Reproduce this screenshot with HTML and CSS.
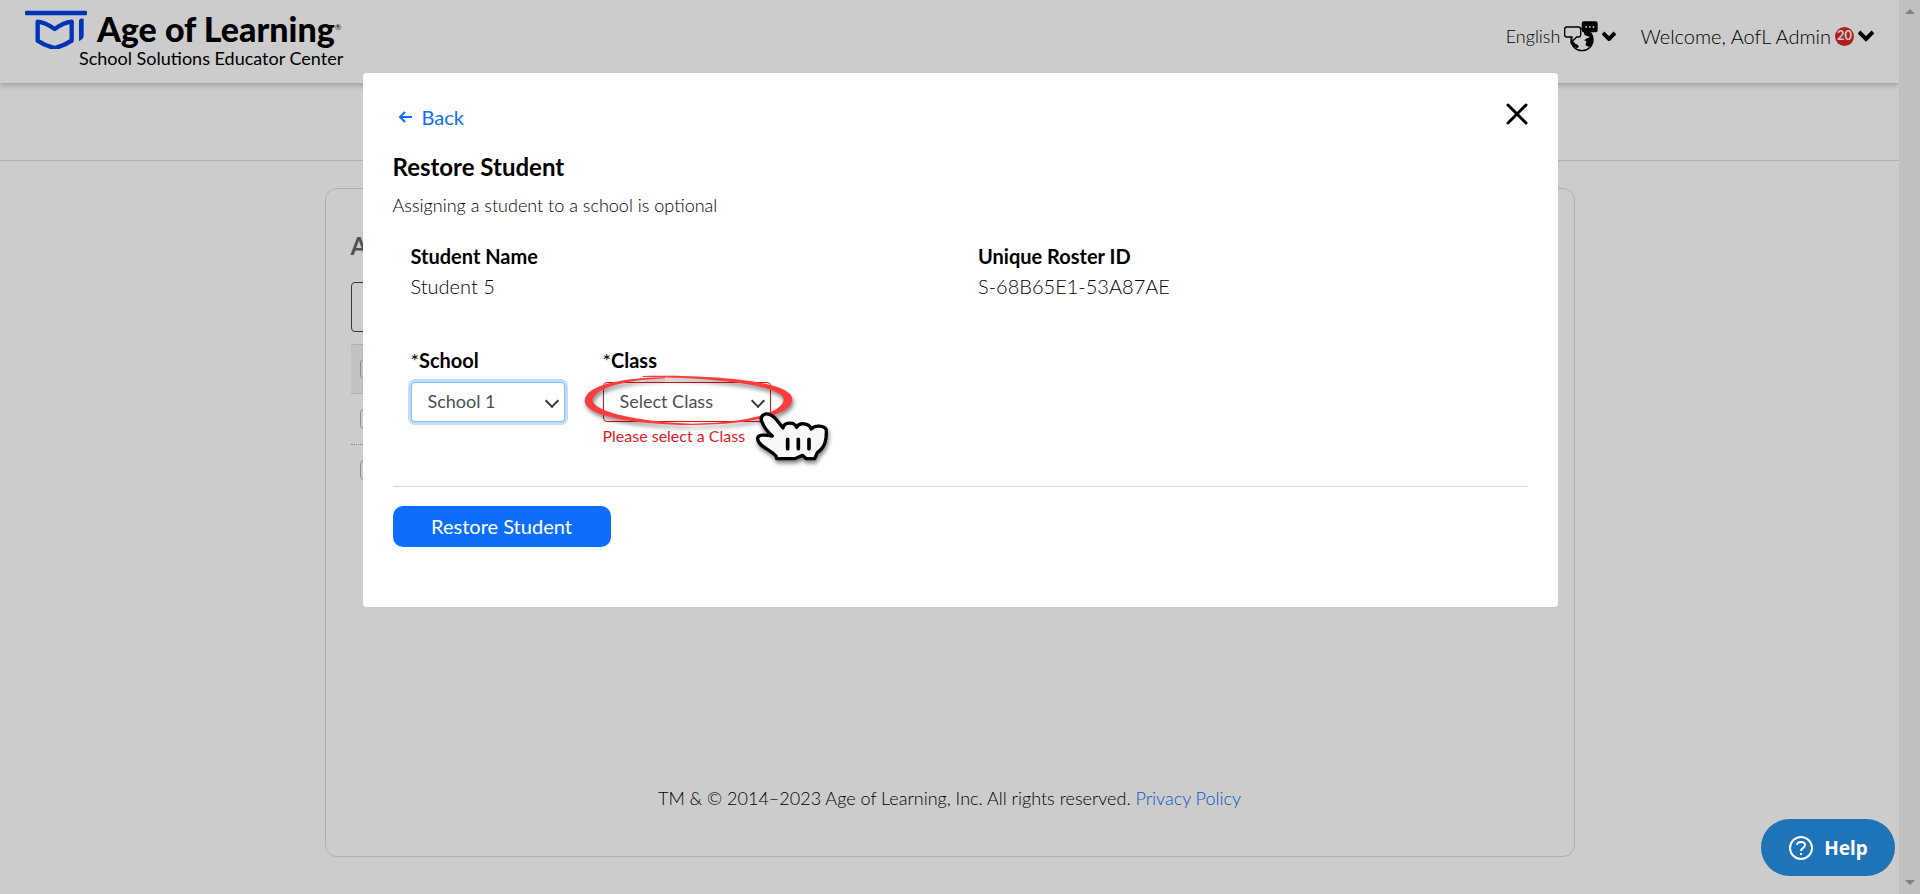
FILE: index.html
```html
<!DOCTYPE html>
<html lang="en">

<head>
    <meta charset="UTF-8">
    <meta name="viewport" content="width=device-width, initial-scale=1.0">
    <title>School Solutions Educator Center</title>
    <link rel="stylesheet" href="styles.css">
</head>

<body>
    <div class="page">
        <header class="header">
            <a class="brand" href="#" aria-label="Age of Learning">
                <svg class="brand-mark" width="62" height="40" viewBox="0 0 186 120" fill="none">
                    <rect x="0" y="5" width="186" height="14" rx="3" fill="#0040ea" />
                    <path d="M38 38 Q60 40 89 60 Q117 40 140 38 V95 Q116 111 89 117 Q60 110 38 95 Z" stroke="#0040ea" stroke-width="13" stroke-linejoin="round" />
                    <path d="M162 34 Q164 26 176 29 V83 Q173 92 162 97 Z" fill="#0040ea" />
                </svg>
                <span class="brand-text">
                    <span class="brand-name">Age of Learning<sup>®</sup></span>
                    <span class="brand-sub">School Solutions Educator Center</span>
                </span>
            </a>
            <nav class="tools">
                <button class="tool tool-lang" type="button">
                    English
                    <svg width="34" height="31" viewBox="0 0 102 93">
                        <circle cx="54" cy="56" r="33" fill="#fff" stroke="#000" stroke-width="4" />
                        <path d="M56 24 Q84 28 87 54 Q86 66 80 74 Q70 82 64 70 Q72 60 60 58 Q70 50 78 48 L62 42 Z M22 62 Q30 60 34 68 Q46 72 44 78 Q40 82 36 80 Q24 76 22 62 Z" fill="#000" />
                        <path d="M8 18 H43 Q50 18 50 25 V41 Q50 48 43 48 H38 L22 64 L24 48 H8 Q2 48 2 41 V25 Q2 18 8 18 Z" fill="#fff" stroke="#000" stroke-width="4" />
                        <path d="M59 1 H95 Q101 1 101 8 V28 Q101 34 95 34 H80 L66 46 L68 34 H60 Q53 34 53 28 V8 Q53 1 59 1 Z" fill="#000" />
                        <path d="M64 18 h5 M75 18 h5 M86 18 h5" stroke="#fff" stroke-width="5" />
                    </svg>
                    <svg width="14" height="10" viewBox="0 0 14 10" fill="none" stroke="#000" stroke-width="4">
                        <path d="M1 2 L7 8 L13 2" />
                    </svg>
                </button>
                <button class="tool" type="button">
                    Welcome, AofL Admin
                    <span class="count">20</span>
                    <svg width="16" height="12" viewBox="0 0 16 12" fill="none" stroke="#000" stroke-width="4">
                        <path d="M1 2 L8 9 L15 2" />
                    </svg>
                </button>
            </nav>
        </header>
        <div class="subnav"></div>
        <main class="card">
            <h1 class="card-title">A</h1>
            <div class="filter"></div>
            <ul class="rows">
                <li class="row row-head"><input type="checkbox" aria-label="Select all"></li>
                <li class="row"><input type="checkbox" aria-label="Select student"></li>
                <li class="row"><input type="checkbox" aria-label="Select student"></li>
            </ul>
            <footer class="footer">
                TM &amp; © 2014–2023 Age of Learning, Inc. All rights reserved. <a href="#">Privacy Policy</a>
            </footer>
        </main>
    </div>
    <div class="scrollbar">
        <span class="arrow arrow-up"></span>
        <span class="arrow arrow-down"></span>
    </div>

    <div class="overlay">
        <section class="modal" role="dialog" aria-labelledby="modal-title">
            <div class="modal-top">
                <a class="back" href="#">
                    <svg width="14" height="12" viewBox="0 0 14 12" fill="none" stroke="#0d6efd" stroke-width="2">
                        <path d="M14 6 H2 M7 1 L2 6 L7 11" />
                    </svg>
                    Back
                </a>
                <button class="close" type="button" aria-label="Close">
                    <svg width="22" height="22" viewBox="0 0 22 22" fill="none" stroke="#000" stroke-width="3" stroke-linecap="round">
                        <path d="M2 2 L20 20 M20 2 L2 20" />
                    </svg>
                </button>
            </div>
            <h2 class="modal-title" id="modal-title">Restore Student</h2>
            <p class="note">Assigning a student to a school is optional</p>
            <dl class="info">
                <div>
                    <dt>Student Name</dt>
                    <dd>Student 5</dd>
                </div>
                <div>
                    <dt>Unique Roster ID</dt>
                    <dd>S-68B65E1-53A87AE</dd>
                </div>
            </dl>
            <form class="fields">
                <div class="field">
                    <label for="school"><span>*</span>School</label>
                    <div class="select-wrap">
                        <select class="select select-focus" id="school">
                            <option>School 1</option>
                        </select>
                    </div>
                </div>
                <div class="field">
                    <label for="class"><span>*</span>Class</label>
                    <div class="select-wrap">
                        <select class="select select-error" id="class">
                            <option>Select Class</option>
                        </select>
                        <svg class="pointer" width="255" height="100" viewBox="600 120 765 300">
                            <path class="ring" d="M788 138 C960 134 1237 148 1237 208 C1235 262 1080 286 930 285 C780 283 617 262 614 212 C616 168 720 143 855 142 L855 145 C740 150 646 172 637 210 C642 250 800 277 935 281 C1080 278 1208 255 1211 208 C1205 165 1000 143 788 141 Z" />
                            <path class="hand" d="M1146 276 C1138 260 1152 248 1168 253 C1186 258 1197 280 1209 294 C1212 276 1242 274 1250 292 C1257 276 1286 278 1294 297 C1304 284 1334 286 1339 300 C1340 330 1336 350 1312 368 L1304 386 L1278 386 L1268 376 L1244 386 L1190 386 L1188 378 C1170 358 1137 350 1133 328 C1130 312 1158 314 1177 318 C1162 305 1152 292 1146 276 Z" />
                            <path d="M1223 328 V356 M1255 328 V356 M1287 328 V356" fill="none" stroke="#000" stroke-width="11" stroke-linecap="round" />
                        </svg>
                    </div>
                    <p class="error">Please select a Class</p>
                </div>
            </form>
            <div class="actions">
                <button class="submit" type="button">Restore Student</button>
            </div>
        </section>
    </div>

    <button class="help" type="button">
        <svg width="26" height="26" viewBox="0 0 26 26" fill="none" stroke="#fff" stroke-width="2">
            <circle cx="13" cy="13" r="11" />
            <path d="M9 10 C9 6 17 6 17 10 C17 13 13 13 13 16" />
            <path d="M13 18 V20" />
        </svg>
        Help
    </button>
</body>

</html>
```
FILE: styles.css
```css
* {
    padding: 0;
    margin: 0;
    box-sizing: border-box;
}

body {
    display: grid;
    grid-template-columns: 1fr 21px;
    min-height: 100vh;
    font-family: Lato, "Open Sans", sans-serif;
    font-size: 20px;
    font-weight: 300;
    color: #000;
    background-color: #fff;
}

a {
    color: #0d6efd;
    text-decoration: none;
}

button {
    font-family: inherit;
    font-weight: inherit;
    border: none;
    cursor: pointer;
}

.page {
    display: flex;
    flex-direction: column;
}

.header {
    display: flex;
    justify-content: space-between;
    height: 83px;
    padding: 8px 25px 0;
    box-shadow: 0 2px 6px rgba(0, 0, 0, .25);
}

.brand {
    display: flex;
    color: #000;
}

.brand-mark {
    margin-top: 1px;
}

.brand-text {
    display: flex;
    flex-direction: column;
    margin-left: -8px;
}

.brand-name {
    padding-left: 18px;
    font-size: 34px;
    font-weight: 900;
    line-height: 41px;
}

.brand-name sup {
    font-size: 8px;
    font-weight: 400;
    line-height: 1;
    vertical-align: 12px;
}

.brand-sub {
    font-size: 18px;
    font-weight: 400;
    line-height: 18px;
}

.tools {
    display: flex;
    gap: 24px;
    height: 56px;
    align-items: center;
}

.tool {
    display: flex;
    align-items: center;
    gap: 4px;
    font-size: 20px;
    background: none;
}

.tool-lang {
    font-size: 18px;
}

.count {
    width: 19px;
    height: 19px;
    border-radius: 50%;
    font-size: 13px;
    font-weight: 700;
    line-height: 17px;
    text-align: center;
    color: #fff;
    background-color: #dc2626;
}

.subnav {
    height: 78px;
    border-bottom: 1px solid #dedede;
}

.card {
    display: flex;
    flex-direction: column;
    flex: 1;
    width: 90%;
    max-width: 1250px;
    margin: 27px auto 37px;
    padding: 39px 25px 40px;
    border: 1px solid #dedede;
    border-radius: 12px;
}

.card-title {
    font-size: 24px;
    line-height: 36px;
    color: #666;
}

.filter {
    width: 320px;
    height: 50px;
    margin: 18px 0 12px;
    border: 1px solid #444;
    border-radius: 4px;
}

.rows {
    list-style: none;
}

.row {
    display: flex;
    align-items: center;
    height: 50px;
    padding-left: 9px;
    border-top: 1px dotted #aaa;
}

.row-head {
    border-top: 1px solid #dedede;
    border-bottom: 1px solid #dedede;
    background-color: #eef6f7;
}

.row-head + .row {
    border-top: none;
}

.row input {
    appearance: none;
    width: 20px;
    height: 20px;
    border: 1px solid #adb5bd;
    border-radius: 4px;
}

.footer {
    margin: auto 0 6px;
    font-size: 18px;
    line-height: 24px;
    text-align: center;
}

.scrollbar {
    display: flex;
    flex-direction: column;
    justify-content: space-between;
    align-items: center;
    padding: 9px 0;
    background-color: #f1f1f1;
}

.arrow {
    border: 5px solid transparent;
}

.arrow-up {
    border-top: none;
    border-bottom-color: #a3a3a3;
}

.arrow-down {
    border-bottom: none;
    border-top-color: #a3a3a3;
}

.overlay {
    position: fixed;
    inset: 0;
    padding-top: 73px;
    background-color: rgba(0, 0, 0, .2);
}

.modal {
    width: 1195px;
    max-width: 90%;
    margin: 0 auto;
    padding: 28px 30px 60px;
    border-radius: 4px;
    background-color: #fff;
}

.modal-top {
    display: flex;
    justify-content: space-between;
    align-items: flex-start;
    padding-left: 5px;
}

.back {
    display: flex;
    align-items: center;
    gap: 10px;
    font-weight: 400;
    line-height: 32px;
}

.close {
    height: 24px;
    margin-top: 2px;
    background: none;
}

.modal-title {
    padding-top: 18px;
    font-size: 24px;
    line-height: 32px;
}

.note {
    padding-top: 10px;
    font-size: 18px;
    line-height: 24px;
}

.info {
    display: grid;
    grid-template-columns: 1fr 1fr;
    padding-top: 24px;
    line-height: 30px;
}

.info div {
    padding-left: 18px;
}

.info dt {
    font-weight: 700;
}

.fields {
    display: flex;
    gap: 38px;
    padding: 44px 18px 38px;
}

.field label {
    display: block;
    padding-bottom: 7px;
    font-weight: 700;
    line-height: 30px;
}

.field label span {
    font-weight: 400;
}

.select-wrap {
    position: relative;
}

.select {
    display: block;
    appearance: none;
    height: 40px;
    padding: 0 36px 2px 16px;
    border: 1px solid #80bdff;
    border-radius: 4px;
    font-family: inherit;
    font-size: 18px;
    font-weight: 400;
    color: #495057;
    background-color: #fff;
}

.select-focus {
    width: 154px;
    box-shadow: 0 0 0 3px #bfdeff;
}

.select-error {
    width: 168px;
    border-color: #dc1414;
}

.select-wrap::after {
    content: "";
    position: absolute;
    top: 14px;
    right: 8px;
    width: 8px;
    height: 8px;
    border: solid #343a40;
    border-width: 0 2px 2px 0;
    transform: rotate(45deg);
}

.pointer {
    position: absolute;
    top: -12px;
    left: -23px;
    z-index: 1;
    overflow: visible;
    pointer-events: none;
}

.ring {
    fill: #ff3b3b;
    filter: drop-shadow(4px 9px 6px rgba(0, 0, 0, .5));
}

.hand {
    fill: #f7f7f7;
    stroke: #000;
    stroke-width: 10px;
    stroke-linejoin: round;
    filter: drop-shadow(3px 9px 6px rgba(0, 0, 0, .5));
}

.error {
    padding-top: 2px;
    font-size: 16px;
    font-weight: 400;
    line-height: 24px;
    color: #e3191f;
}

.actions {
    padding-top: 19px;
    border-top: 1px solid #d5d5d5;
}

.submit {
    width: 218px;
    height: 41px;
    padding-bottom: 2px;
    border-radius: 10px;
    font-size: 20px;
    font-weight: 400;
    color: #fff;
    background-color: #0d6efd;
}

.help {
    position: fixed;
    right: 25px;
    bottom: 18px;
    display: flex;
    justify-content: center;
    align-items: center;
    gap: 10px;
    width: 134px;
    height: 57px;
    border-radius: 29px;
    font-family: "Noto Sans", sans-serif;
    font-size: 19px;
    font-weight: 700;
    color: #fff;
    background-color: #1f73b7;
}
```
